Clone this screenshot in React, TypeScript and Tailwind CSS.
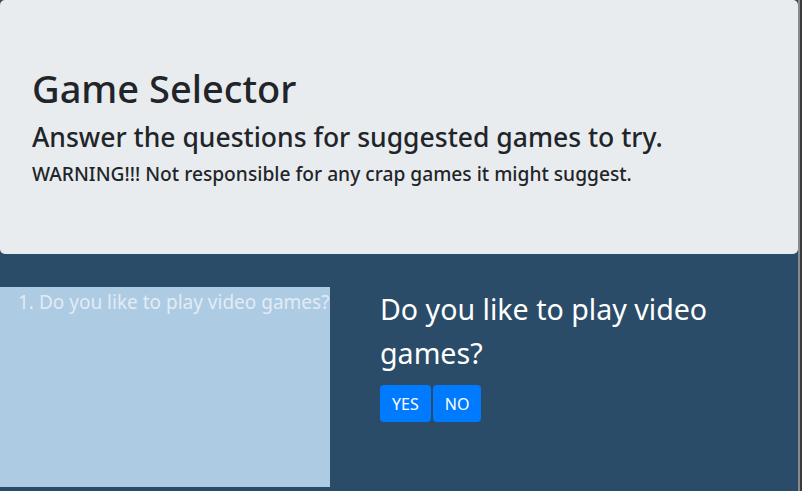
import React from 'react';

const font = { fontFamily: '"Noto Sans", "Liberation Sans", sans-serif' };

export default function App() {
  return (
    <div className="min-h-screen bg-[#2a4c68] flex" style={font}>
      <div className="w-[798px] flex flex-col">
        <div className="bg-[#e9ecef] rounded-[5px] px-8 pt-16 pb-[60px] mb-[33px] text-[#212529]">
          <h1 className="text-[38px] leading-[48px] font-medium mb-2">Game Selector</h1>
          <h3 className="text-[26.5px] leading-[34px] font-medium mb-2">
            Answer the questions for suggested games to try.
          </h3>
          <h5 className="text-[19.2px] leading-6 font-medium mb-2">
            WARNING!!! Not responsible for any crap games it might suggest.
          </h5>
        </div>
        <div className="flex">
          <div className="w-[330px] h-[200px] bg-[#adcbe3] pl-[18px] pt-[2px] text-[19px] leading-[27px] text-[#e2ecf5]">
            1. Do you like to play video games?
          </div>
          <div className="pl-[50px] w-[400px]">
            <h3 className="text-[28.6px] leading-[44px] text-white">
              Do you like to play video games?
            </h3>
            <div className="flex gap-[2px] mt-[10px]">
              <button className="bg-[#007bff] text-white text-base h-[37px] px-3 rounded">YES</button>
              <button className="bg-[#007bff] text-white text-base h-[37px] px-3 rounded">NO</button>
            </div>
          </div>
        </div>
      </div>
      <div className="w-[2px] bg-[#8a8a8a]" />
      <div className="w-[2px] bg-[#3a3a3a]" />
    </div>
  );
}
